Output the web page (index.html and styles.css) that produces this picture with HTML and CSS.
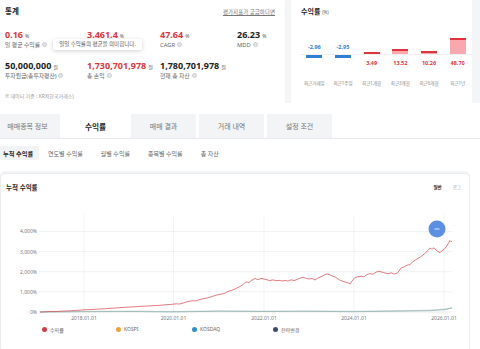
FILE: index.html
```html
<!DOCTYPE html>
<html lang="ko">
<head>
<meta charset="utf-8">
<title>백테스트 결과</title>
<link rel="stylesheet" href="styles.css">
</head>
<body>
<div class="top">
  <section class="card stats">
    <div class="stats-head">
      <h2 class="card-title">통계</h2>
      <a class="help-link">평가지표가 궁금하다면</a>
    </div>
    <div class="stats-grid">
      <div class="stat">
        <div class="val red">0.16<span class="unit">%</span></div>
        <div class="lbl">일 평균 수익률<i class="info"></i></div>
      </div>
      <div class="stat">
        <div class="val red">3.461.4<span class="unit">%</span></div>
        <div class="lbl"></div>
      </div>
      <div class="stat">
        <div class="val red">47.64<span class="unit">%</span></div>
        <div class="lbl">CAGR<i class="info"></i></div>
      </div>
      <div class="stat">
        <div class="val">26.23<span class="unit">%</span></div>
        <div class="lbl">MDD<i class="info"></i></div>
      </div>
      <div class="stat">
        <div class="val">50,000,000<span class="unit">원</span></div>
        <div class="lbl">투자원금(총투자평잔)<i class="info"></i></div>
      </div>
      <div class="stat">
        <div class="val red">1,730,701,978<span class="unit">원</span></div>
        <div class="lbl">총 손익<i class="info"></i></div>
      </div>
      <div class="stat">
        <div class="val">1,780,701,978<span class="unit">원</span></div>
        <div class="lbl">현재 총 자산<i class="info"></i></div>
      </div>
    </div>
    <p class="source">※ 데이터 기준 : KRX(한국거래소)</p>
    <div class="tooltip">일일 수익률의 평균을 의미합니다.</div>
  </section>

  <section class="card returns">
    <h2 class="card-title">수익률 <small>(%)</small></h2>
    <div class="bars">
      <div class="col">
        <div class="pos"><span class="v blue">-2.96</span></div>
        <div class="neg"><span class="bar-down"></span></div>
        <div class="period">최근거래일</div>
      </div>
      <div class="col">
        <div class="pos"><span class="v blue">-2.95</span></div>
        <div class="neg"><span class="bar-down"></span></div>
        <div class="period">최근1주일</div>
      </div>
      <div class="col">
        <div class="pos"><span class="bar-up" style="height:2.5px"></span></div>
        <div class="neg"><span class="v red">3.49</span></div>
        <div class="period">최근1개월</div>
      </div>
      <div class="col">
        <div class="pos"><span class="bar-up" style="height:5px"></span></div>
        <div class="neg"><span class="v red">13.52</span></div>
        <div class="period">최근3개월</div>
      </div>
      <div class="col">
        <div class="pos"><span class="bar-up" style="height:3.5px"></span></div>
        <div class="neg"><span class="v red">10.26</span></div>
        <div class="period">최근6개월</div>
      </div>
      <div class="col">
        <div class="pos"><span class="bar-up" style="height:16px"></span></div>
        <div class="neg"><span class="v red">48.70</span></div>
        <div class="period">최근1년</div>
      </div>
    </div>
  </section>
</div>

<nav class="tabs">
  <div class="tab">매매종목 정보</div>
  <div class="tab active">수익률</div>
  <div class="tab">매매 결과</div>
  <div class="tab">거래 내역</div>
  <div class="tab">설정 조건</div>
</nav>

<nav class="subtabs">
  <div class="subtab active">누적 수익률</div>
  <div class="subtab">연도별 수익률</div>
  <div class="subtab">월별 수익률</div>
  <div class="subtab">종목별 수익률</div>
  <div class="subtab">총 자산</div>
</nav>

<section class="chart-card">
  <div class="chart-head">
    <h3 class="chart-title">누적 수익률</h3>
    <div class="scale"><span class="on">일반</span><span>로그</span></div>
  </div>
  <svg class="plot" viewBox="1 200 468 122" xmlns="http://www.w3.org/2000/svg">
    <g class="gridline">
      <line x1="84" y1="215" x2="84" y2="312"/>
      <line x1="173.5" y1="215" x2="173.5" y2="312"/>
      <line x1="264" y1="215" x2="264" y2="312"/>
      <line x1="354" y1="215" x2="354" y2="312"/>
      <line x1="444" y1="215" x2="444" y2="312"/>
      <line x1="39" y1="231.5" x2="452" y2="231.5"/>
      <line x1="39" y1="251.6" x2="452" y2="251.6"/>
      <line x1="39" y1="271.7" x2="452" y2="271.7"/>
      <line x1="39" y1="291.8" x2="452" y2="291.8"/>
    </g>
    <line class="axis" x1="39" y1="312" x2="452" y2="312"/>
    <g class="ylabel">
      <text x="37" y="233.4">4,000%</text>
      <text x="37" y="253.5">3,000%</text>
      <text x="37" y="273.6">2,000%</text>
      <text x="37" y="293.7">1,000%</text>
      <text x="37" y="313.9">0%</text>
    </g>
    <g class="xlabel">
      <text x="84" y="320.4">2018.01.01</text>
      <text x="173.5" y="320.4">2020.01.01</text>
      <text x="264" y="320.4">2022.01.01</text>
      <text x="354" y="320.4">2024.01.01</text>
      <text x="444" y="320.4">2026.01.01</text>
    </g>
    <polyline class="line-kosdaq" points="40,312 84,311.7 130,311.5 173,311.9 220,311.2 264,311.5 310,311.3 354,311.7 400,311.1 430,310.7 445,309.6 452,308"/>
    <polyline class="line-kospi" points="40,312 84,311.4 130,311.1 173,311.5 220,310.9 264,311.2 310,311 354,311.3 400,310.7 430,310.2 445,309 452,307.6"/>
    <polyline class="line-main" points="40,312 45,311.8 50,311.5 55,311.6 60,311.2 65,311 70,310.8 75,310.5 80,310.2 84,309.8 90,309.6 95,309.3 100,309 105,308.7 110,308.3 115,308.1 120,307.6 125,307.3 130,307 135,306.8 140,306.4 145,306.2 150,305.9 155,305.6 160,305.3 165,304.8 170,304.5 173,304.2 176,303.8 180,304 184,302.8 188,301.5 192,300.8 196,300.9 200,299.5 204,298.6 208,297.8 212,296.5 216,295.2 220,294.3 224,293.6 228,291.5 232,290.2 236,288.5 240,286.5 243,284.5 246,281.8 249,282.5 252,280 255,278.5 258,279.6 261,278.4 264,279 267,279.8 270,280.5 273,279.9 276,280.8 279,280.3 282,281 285,280.5 288,281 291,279.8 294,280.6 297,279.5 300,278.2 303,277.2 306,278.4 309,279 312,278.5 315,280 318,278 321,276.8 324,275.2 327,273.8 330,274.9 333,276.3 336,277.5 339,279.7 342,281 345,282 348,283 350,284 352,281 355,277.5 358,276.8 361,276.2 364,276.9 367,274.5 370,273.6 373,274.2 376,272.2 379,271.2 382,272.1 385,273 388,273.6 391,272.8 394,274 397,273.2 399,271 401,268 404,266.8 407,265.2 410,264.6 413,261.5 416,259.6 419,257.8 422,255.9 425,253.2 428,250.5 430,248 432,249.2 434,247.8 436,250 438,251.5 440,252.8 442,250.6 444,249.5 446,247 448,244 450,240.5 451,241.8 452,241"/>
    <circle class="fab" cx="437" cy="229" r="8.5"/>
    <line class="fab-mark" x1="434.5" y1="229" x2="439.5" y2="229"/>
  </svg>
  <div class="legend">
    <span class="legend-item"><i class="dot dot-red"></i>수익률</span>
    <span class="legend-item"><i class="dot dot-orange"></i>KOSPI</span>
    <span class="legend-item"><i class="dot dot-blue"></i>KOSDAQ</span>
    <span class="legend-item"><i class="dot dot-navy"></i>전략변경</span>
  </div>
</section>
</body>
</html>
```

FILE: styles.css
```css
* { box-sizing: border-box; margin: 0; padding: 0; }

body {
  margin: 0;
  width: 480px;
  height: 349px;
  overflow: hidden;
  background: #fff;
  color: #222;
  font-family: "Noto Sans", "Noto Sans CJK KR", sans-serif;
}

.red { color: #e3343e; }
.blue { color: #2f7fd6; }

/* ---------- top cards ---------- */
.top {
  display: flex;
  gap: 6px;
  height: 103px;
  background: #f4f5f7;
}

.card { background: #fff; }

.card-title {
  font-size: 7.5px;
  font-weight: 700;
  line-height: 11px;
}

.stats {
  position: relative;
  width: 285px;
  padding: 6px 10px 0 5px;
}

.stats-head {
  display: flex;
  justify-content: space-between;
  align-items: center;
  height: 11px;
}

.help-link {
  font-size: 5.5px;
  color: #777;
  text-decoration: underline;
}

.stats-grid {
  display: grid;
  grid-template-columns: 82px 73px 77px 1fr;
  row-gap: 11px;
  margin-top: 11.5px;
}

.val {
  font-size: 9px;
  font-weight: 700;
  line-height: 11px;
  height: 11px;
  white-space: nowrap;
}

.unit {
  font-size: 5px;
  font-weight: 400;
  color: #555;
  margin-left: 2px;
}

.lbl {
  display: flex;
  align-items: center;
  gap: 2px;
  height: 8px;
  margin-top: 1px;
  font-size: 5.8px;
  line-height: 8px;
  color: #666;
  white-space: nowrap;
}

.info {
  display: inline-block;
  width: 5px;
  height: 5px;
  border-radius: 50%;
  background: #e3e5e8;
  border: 1.2px solid #c9ccd1;
}

.source {
  margin-top: 13px;
  font-size: 5px;
  line-height: 7px;
  color: #999;
}

.tooltip {
  position: absolute;
  left: 53px;
  top: 39px;
  width: 89px;
  height: 11px;
  background: #fff;
  border-radius: 2px;
  box-shadow: 0 1px 4px rgba(0, 0, 0, 0.18);
  font-size: 5.5px;
  line-height: 11px;
  color: #555;
  text-align: center;
  white-space: nowrap;
}

/* ---------- returns card ---------- */
.returns {
  width: 181px;
  padding: 6px 0 0 9px;
}

.returns .card-title {
  padding-left: 1px;
  line-height: 12px;
  font-size: 7px;
}

.returns small {
  font-size: 4.5px;
  font-weight: 400;
  color: #555;
}

.bars {
  display: grid;
  grid-template-columns: repeat(6, 1fr);
  margin-top: 16px;
}

.col {
  display: flex;
  flex-direction: column;
  align-items: center;
}

.pos {
  width: 100%;
  height: 20px;
  display: flex;
  flex-direction: column;
  justify-content: flex-end;
  align-items: center;
}

.neg {
  width: 100%;
  height: 12px;
  border-top: 1px solid #f0f0f2;
  display: flex;
  flex-direction: column;
  align-items: center;
}

.v {
  font-size: 5.5px;
  font-weight: 700;
  line-height: 6px;
}

.pos .v { margin-bottom: 4px; }
.neg .v { margin-top: 5px; }

.bar-up {
  display: block;
  width: 16px;
  background: #f9a9ad;
  border-top: 2px solid #e2323d;
}

.bar-down {
  display: block;
  width: 16px;
  height: 3px;
  background: #2f7fd6;
}

.period {
  margin-top: 13.5px;
  font-size: 4.5px;
  line-height: 6px;
  color: #888;
  white-space: nowrap;
}

/* ---------- tabs ---------- */
.tabs {
  display: flex;
  gap: 3px;
  margin-top: 11px;
  margin-left: -5px;
  border-bottom: 1px solid #e7e8eb;
}

.tab {
  width: 65px;
  height: 24px;
  display: flex;
  align-items: center;
  justify-content: center;
  background: #f3f4f6;
  font-size: 7px;
  color: #777;
}

.tab.active {
  background: #fff;
  color: #222;
  font-weight: 700;
  font-size: 7.7px;
}

.subtabs {
  display: flex;
  height: 14px;
  margin-top: 7px;
}

.subtab {
  display: flex;
  align-items: center;
  padding: 0 9px;
  font-size: 6px;
  color: #666;
  white-space: nowrap;
}

.subtab.active {
  padding: 0 6px 0 3px;
  background: #f2f3f5;
  border-radius: 2px;
  font-size: 6.2px;
  font-weight: 700;
  color: #222;
}

/* ---------- chart card ---------- */
.chart-card {
  width: 470px;
  height: 180px;
  margin-top: 13px;
  background: #fff;
  border: 1px solid #ebecef;
  border-radius: 5px;
  box-shadow: 0 -2px 0 #f4f5f7;
}

.chart-head {
  height: 26px;
  display: flex;
  align-items: center;
  justify-content: space-between;
  padding: 0 8px 0 5px;
}

.chart-title {
  font-size: 6.5px;
  font-weight: 700;
}

.scale {
  display: flex;
  gap: 11px;
  font-size: 4.5px;
  color: #999;
}

.scale .on {
  color: #222;
  font-weight: 700;
}

.plot {
  display: block;
  width: 468px;
  height: 122px;
}

.gridline line {
  stroke: #e8e9ec;
  stroke-width: 0.6;
}

.axis {
  stroke: #dcdde1;
  stroke-width: 0.6;
}

.ylabel text,
.xlabel text {
  font-family: "Noto Sans", sans-serif;
  font-size: 5px;
  fill: #7a7a7a;
}

.ylabel text { text-anchor: end; }
.xlabel text { text-anchor: middle; }

.line-main {
  fill: none;
  stroke: #d8454d;
  stroke-width: 0.7;
  stroke-linejoin: round;
}

.line-kospi {
  fill: none;
  stroke: #a9b8b4;
  stroke-width: 0.6;
}

.line-kosdaq {
  fill: none;
  stroke: #5f9f9b;
  stroke-width: 0.6;
}

.fab { fill: #5b8fe3; }

.fab-mark {
  stroke: #fff;
  stroke-width: 0.8;
}

.legend {
  display: grid;
  grid-template-columns: 74px 76px 81px auto;
  align-items: center;
  height: 14px;
  padding-left: 41px;
}

.legend-item {
  display: flex;
  align-items: center;
  gap: 3px;
  font-size: 5px;
  color: #666;
}

.dot {
  display: inline-block;
  width: 5px;
  height: 5px;
  border-radius: 50%;
}

.dot-red { background: #d63b45; }
.dot-orange { background: #f2a23a; }
.dot-blue { background: #2b8ed0; }
.dot-navy { background: #3d4a6b; }
```
